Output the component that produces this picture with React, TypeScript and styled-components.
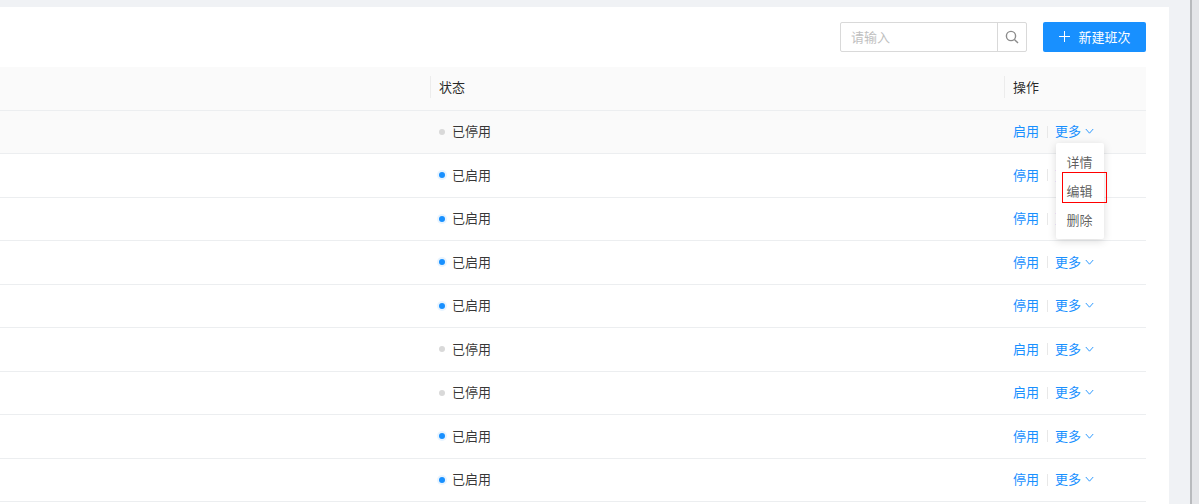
import styled, { createGlobalStyle } from "styled-components";

const GlobalStyle = createGlobalStyle`
  html, body {
    margin: 0;
    padding: 0;
    height: 100%;
    overflow: hidden;
  }
  body {
    font-family: "Noto Sans CJK SC", "Liberation Sans", sans-serif;
    font-size: 14px;
    color: rgba(0, 0, 0, 0.65);
  }
`;

const Page = styled.div`
  display: flex;
  width: 1199px;
  height: 504px;
  overflow: hidden;
  background: #f0f2f5;
`;

const Main = styled.div`
  flex: 1;
  padding-top: 7px;
  padding-right: 21px;
  min-width: 0;
`;

const Card = styled.div`
  background: #fff;
  height: 497px;
  padding: 15px 23px 0 0;
  box-sizing: border-box;
  overflow: hidden;
`;

const Toolbar = styled.div`
  display: flex;
  justify-content: flex-end;
  gap: 16px;
  height: 30px;
  margin-bottom: 15px;
`;

const Search = styled.div`
  display: flex;
  width: 187px;
  height: 30px;
  box-sizing: border-box;
  border: 1px solid #d9d9d9;
  border-radius: 2px;
`;

const SearchInput = styled.div`
  flex: 1;
  padding-left: 10px;
  font-size: 13px;
  line-height: 27px;
  color: #bfbfbf;
`;

const SearchButton = styled.div`
  display: flex;
  align-items: center;
  justify-content: center;
  width: 29px;
  box-sizing: border-box;
  border-left: 1px solid #d9d9d9;
  color: #8c8c8c;
`;

const PrimaryButton = styled.div`
  display: flex;
  align-items: center;
  justify-content: center;
  gap: 8px;
  width: 103px;
  height: 30px;
  padding: 0 0 1px 1px;
  box-sizing: border-box;
  border-radius: 2px;
  background: #1890ff;
  color: #fff;
  font-size: 13px;
`;

const Table = styled.div`
  display: flex;
  flex-direction: column;
`;

const Row = styled.div<{ $muted?: boolean }>`
  display: grid;
  grid-template-columns: 430px 574px 142px;
  align-items: center;
  height: 43.5px;
  padding-bottom: 2px;
  box-sizing: border-box;
  border-bottom: 1px solid #eceef0;
  background: ${({ $muted }) => ($muted ? "#fafafa" : "#fff")};
`;

const HeaderRow = styled(Row)`
  background: #fafafa;
`;

const HeaderCell = styled.div`
  height: 22px;
  padding-left: 8px;
  border-left: 1px solid #ececec;
  font-size: 13px;
  line-height: 21px;
  color: rgba(0, 0, 0, 0.85);
`;

const Status = styled.div`
  display: flex;
  align-items: center;
  gap: 7px;
  padding-left: 9px;
  font-size: 13px;
  color: rgba(0, 0, 0, 0.8);
`;

const Dot = styled.span<{ $on: boolean }>`
  width: 6px;
  height: 6px;
  margin-top: 2px;
  border-radius: 50%;
  background: ${({ $on }) => ($on ? "#1890ff" : "#d9d9d9")};
  box-shadow: ${({ $on }) => ($on ? "0 0 0 2px #e8f4ff" : "none")};
`;

const Actions = styled.div`
  display: flex;
  align-items: center;
  padding-left: 9px;
  font-size: 13px;
  color: #1890ff;
`;

const Divider = styled.span`
  width: 1px;
  height: 12px;
  margin: 2px 7px 0 8px;
  background: #e8e8e8;
`;

const More = styled.span`
  display: flex;
  align-items: center;
  gap: 4px;
`;

const MoreCell = styled.div`
  position: relative;
`;

const Menu = styled.div`
  position: absolute;
  top: 22px;
  left: 52px;
  z-index: 2;
  width: 48px;
  height: 96px;
  padding: 4px 1px 4px 0;
  box-sizing: border-box;
  border-radius: 2px;
  background: #fff;
  box-shadow: 0 2px 8px rgba(0, 0, 0, 0.15);
`;

const MenuItem = styled.div`
  height: 29px;
  font-size: 13px;
  line-height: 29px;
  text-align: center;
  color: rgba(0, 0, 0, 0.65);
`;

const Highlight = styled.div`
  position: absolute;
  top: 29px;
  left: 6px;
  width: 45px;
  height: 31px;
  box-sizing: border-box;
  border: 1px solid #f00;
`;

const Scrollbar = styled.div`
  width: 9px;
  flex-shrink: 0;
  background: #e4e5e8;
  border-left: 2px solid #b8babd;
  box-sizing: border-box;
`;

const Chevron = () => (
  <svg width="9" height="9" viewBox="0 0 9 9" fill="none" stroke="currentColor" strokeWidth="0.9">
    <path d="M0.8 3 4.5 7.2 8.2 3" />
  </svg>
);

const rows = [false, true, true, true, true, false, false, true, true];

export default function App() {
  return (
    <>
      <GlobalStyle />
      <Page>
        <Main>
          <Card>
            <Toolbar>
              <Search>
                <SearchInput>请输入</SearchInput>
                <SearchButton>
                  <svg width="14" height="14" viewBox="0 0 14 14" fill="none" stroke="currentColor" strokeWidth="1.4">
                    <circle cx="6" cy="6" r="4.6" />
                    <path d="M9.4 9.4 13 13" />
                  </svg>
                </SearchButton>
              </Search>
              <PrimaryButton>
                <svg width="11" height="11" viewBox="0 0 11 11" stroke="currentColor" strokeWidth="1">
                  <path d="M5.5 0V11M0 5.5H11" />
                </svg>
                新建班次
              </PrimaryButton>
            </Toolbar>
            <Table>
              <HeaderRow>
                <div />
                <HeaderCell>状态</HeaderCell>
                <HeaderCell>操作</HeaderCell>
              </HeaderRow>
              {rows.map((on, i) => (
                <Row key={i} $muted={i === 0}>
                  <div />
                  <Status>
                    <Dot $on={on} />
                    {on ? "已启用" : "已停用"}
                  </Status>
                  <MoreCell>
                    <Actions>
                      {on ? "停用" : "启用"}
                      <Divider />
                      <More>
                        更多
                        <Chevron />
                      </More>
                    </Actions>
                    {i === 0 && (
                      <Menu>
                        <MenuItem>详情</MenuItem>
                        <MenuItem>编辑</MenuItem>
                        <MenuItem>删除</MenuItem>
                        <Highlight />
                      </Menu>
                    )}
                  </MoreCell>
                </Row>
              ))}
            </Table>
          </Card>
        </Main>
        <Scrollbar />
      </Page>
    </>
  );
}
